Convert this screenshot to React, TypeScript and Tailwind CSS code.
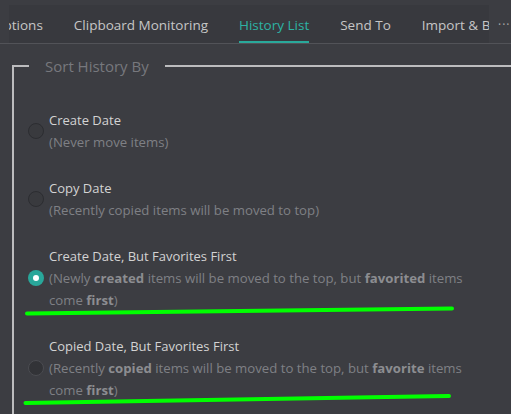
import React from "react";

const font = { fontFamily: '"Open Sans", "Noto Sans", sans-serif' };

function Radio({ checked, dim }: { checked?: boolean; dim?: boolean }) {
  if (checked) {
    return (
      <div className="w-[16px] h-[16px] rounded-full bg-[#29a79a] flex items-center justify-center shrink-0">
        <div className="w-[6px] h-[6px] rounded-full bg-white" />
      </div>
    );
  }
  return (
    <div
      className={
        dim
          ? "w-[16px] h-[16px] rounded-full bg-[#323337] border border-[#4b4c51] shrink-0"
          : "w-[16px] h-[16px] rounded-full bg-[#393a3e] border border-[#2c2d31] shrink-0"
      }
    />
  );
}

function Item({
  title,
  children,
  checked,
  dim,
}: {
  title: string;
  children: React.ReactNode;
  checked?: boolean;
  dim?: boolean;
}) {
  return (
    <div className="flex items-center gap-[5px]">
      <Radio checked={checked} dim={dim} />
      <div className="flex flex-col text-[13px] leading-[22px]">
        <div className="text-[#d3d3d3]">{title}</div>
        <div className="text-[#7f8085] text-[13.2px]">{children}</div>
      </div>
    </div>
  );
}

function B({ children }: { children: React.ReactNode }) {
  return <span className="font-bold text-[#8c8d91]">{children}</span>;
}

export default function App() {
  return (
    <div
      className="relative w-[511px] h-[414px] overflow-hidden bg-[#3c3d42]"
      style={font}
    >
      {/* Tab header */}
      <div className="flex items-end h-[44px] border-b border-[#525358]">
        <div className="ml-[9px] w-[480px] h-[38px] bg-[#38393e] overflow-hidden flex items-stretch">
          <div className="flex gap-[31px] ml-[-16px] text-[13.5px] text-[#c6c6c6] whitespace-nowrap">
            <div className="flex items-center pt-[2px]">Options</div>
            <div className="flex items-center pt-[2px]">Clipboard Monitoring</div>
            <div className="relative flex items-center pt-[2px] text-[#2db3a4]">
              History List
              <div className="absolute left-0 right-0 bottom-[-1px] h-[3px] bg-[#29a99b]" />
            </div>
            <div className="flex items-center pt-[2px]">Send To</div>
            <div className="flex items-center pt-[2px]">Import &amp; Backup</div>
          </div>
        </div>
        <div className="h-[38px] flex items-center pl-[9px] pt-[2px] text-[12px] text-[#a8a8a8] tracking-[1px]">
          ···
        </div>
      </div>

      {/* Group box */}
      <fieldset className="ml-[12px] mt-[12px] w-[520px] h-[420px] border-t-2 border-l-2 border-[#bcbcbe] p-0 m-0">
        <legend className="ml-[15px] px-[16px] text-[15px] leading-[20px] text-[#77787d]">
          Sort History By
        </legend>
        <div className="flex flex-col gap-[24px] pl-[14px] pt-[33px]">
          <Item title="Create Date">(Never move items)</Item>
          <Item title="Copy Date">(Recently copied items will be moved to top)</Item>
          <Item title="Create Date, But Favorites First" checked>
            (Newly <B>created</B> items will be moved to the top, but <B>favorited</B> items
            <br />
            come <B>first</B>)
          </Item>
          <Item title="Copied Date, But Favorites First" dim>
            (Recently <B>copied</B> items will be moved to the top, but <B>favorite</B> items
            <br />
            come <B>first</B>)
          </Item>
        </div>
      </fieldset>

      {/* Hand-drawn annotation lines */}
      <svg
        className="absolute left-0 top-0 pointer-events-none"
        width="511"
        height="414"
        viewBox="0 0 511 414"
      >
        <path
          d="M27 313.5 C 150 312, 300 310, 452 308.5"
          stroke="#00ff00"
          strokeWidth="4"
          strokeLinecap="round"
          fill="none"
        />
        <path
          d="M25.5 403 C 150 401, 300 398, 449 396"
          stroke="#00ff00"
          strokeWidth="4"
          strokeLinecap="round"
          fill="none"
        />
      </svg>
    </div>
  );
}
